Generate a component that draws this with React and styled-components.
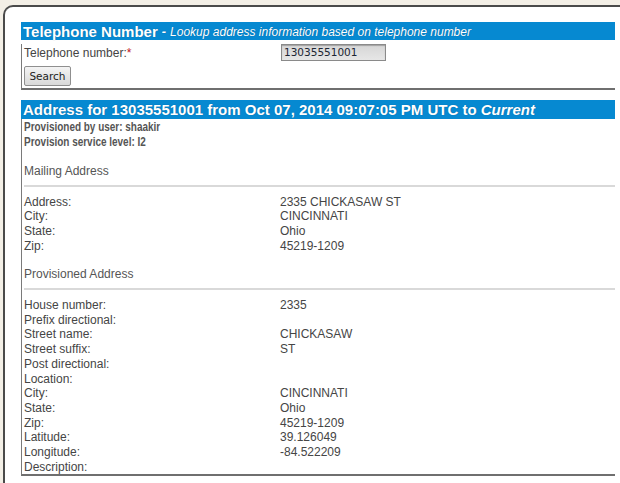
import React from "react";
import styled, { createGlobalStyle } from "styled-components";

const GlobalStyle = createGlobalStyle`
  html, body {
    margin: 0;
    padding: 0;
    background: #f3efe6;
    overflow: hidden;
  }
  body {
    font-family: "Liberation Sans", Arial, sans-serif;
  }
`;

const Frame = styled.div`
  margin: 5px 0 0 3px;
  height: calc(100vh - 5px);
  background: #fff;
  border-top: 2px solid #4a4a4a;
  border-left: 2px solid #4a4a4a;
  border-top-left-radius: 10px;
  padding: 15px 0 0 16px;
  box-sizing: border-box;
  overflow: hidden;
`;

const Panel = styled.section`
  width: 594px;
  margin-top: ${(p) => p.$gap || 0}px;
`;

const Header = styled.div`
  height: ${(p) => p.$h || 18}px;
  background: #0689d1;
  color: #fff;
  display: flex;
  align-items: center;
  padding-left: 2px;
  white-space: nowrap;
  text-shadow: 0 0 1px rgba(0, 40, 80, 0.45);
`;

const Title = styled.span`
  font-size: 15px;
  font-weight: bold;
`;

const Subtitle = styled.span`
  font-size: 12px;
  font-style: italic;
  margin-left: 4px;
`;

const Dash = styled.span`
  font-weight: bold;
  font-size: 13px;
  margin-right: 4px;
`;

const Em = styled.em`
  font-style: italic;
`;

const Body = styled.div`
  border-left: 1px solid #7a7a7a;
  border-bottom: 2px solid #6f6f6f;
  padding: ${(p) => p.$pad || "0 0 0 2px"};
`;

const FormRow = styled.div`
  display: grid;
  grid-template-columns: 257px 1fr;
  align-items: center;
  height: 17px;
  margin-top: 4px;
  font-size: 12px;
  color: #444;
`;

const Req = styled.span`
  color: #c0141b;
`;

const Input = styled.div`
  width: 105px;
  height: 17px;
  box-sizing: border-box;
  border: 1px solid #8a8a8a;
  background: linear-gradient(#d6d6d6, #e6e6e6);
  box-shadow: inset 0 1px 1px rgba(0, 0, 0, 0.25);
  font-family: "DejaVu Sans", sans-serif;
  font-size: 10.5px;
  line-height: 15px;
  color: #1c2633;
  padding-left: 2px;
`;

const Button = styled.button`
  margin-top: 5px;
  margin-bottom: 2px;
  width: 47px;
  height: 20px;
  padding: 0;
  border: 1px solid #8f8f8f;
  border-radius: 2px;
  background: linear-gradient(#f4f4f4, #d9d9d9);
  font-family: "DejaVu Sans", sans-serif;
  font-size: 10.5px;
  color: #222;
  display: block;
`;

const Info = styled.div`
  font-weight: bold;
  font-size: 12px;
  line-height: 15px;
  color: #555;
  white-space: nowrap;
  transform: scaleX(0.83);
  transform-origin: left center;
`;

const SectionTitle = styled.div`
  margin-top: 14px;
  font-size: 12px;
  line-height: 14.6px;
  color: #555;
`;

const Rule = styled.div`
  margin-top: 6px;
  height: 2px;
  background: #d9d9d9;
`;

const Table = styled.div`
  margin-top: 8px;
  display: grid;
  grid-template-columns: 256px 1fr;
  font-size: 12px;
  line-height: 14.7px;
  color: #454545;
`;

const Cell = styled.div`
  min-height: 14.7px;
  white-space: nowrap;
`;

const mailing = [
  ["Address:", "2335 CHICKASAW ST"],
  ["City:", "CINCINNATI"],
  ["State:", "Ohio"],
  ["Zip:", "45219-1209"],
];

const provisioned = [
  ["House number:", "2335"],
  ["Prefix directional:", ""],
  ["Street name:", "CHICKASAW"],
  ["Street suffix:", "ST"],
  ["Post directional:", ""],
  ["Location:", ""],
  ["City:", "CINCINNATI"],
  ["State:", "Ohio"],
  ["Zip:", "45219-1209"],
  ["Latitude:", "39.126049"],
  ["Longitude:", "-84.522209"],
  ["Description:", ""],
];

function Fields({ rows }) {
  return (
    <Table>
      {rows.map(([k, v], i) => (
        <React.Fragment key={i}>
          <Cell>{k}</Cell>
          <Cell>{v}</Cell>
        </React.Fragment>
      ))}
    </Table>
  );
}

export default function App() {
  return (
    <>
      <GlobalStyle />
      <Frame>
        <Panel>
          <Header $h={18}>
            <Title>Telephone Number</Title>
            <Subtitle>
              <Dash>-</Dash>Lookup address information based on telephone number
            </Subtitle>
          </Header>
          <Body>
            <FormRow>
              <span>
                Telephone number:<Req>*</Req>
              </span>
              <Input>13035551001</Input>
            </FormRow>
            <Button>Search</Button>
          </Body>
        </Panel>
        <Panel $gap={10}>
          <Header $h={19}>
            <Title>
              Address for 13035551001 from Oct 07, 2014 09:07:05 PM UTC to <Em>Current</Em>
            </Title>
          </Header>
          <Body $pad="1px 0 0 2px">
            <Info>Provisioned by user: shaakir</Info>
            <Info>Provision service level: I2</Info>
            <SectionTitle>Mailing Address</SectionTitle>
            <Rule />
            <Fields rows={mailing} />
            <SectionTitle>Provisioned Address</SectionTitle>
            <Rule />
            <Fields rows={provisioned} />
          </Body>
        </Panel>
      </Frame>
    </>
  );
}
